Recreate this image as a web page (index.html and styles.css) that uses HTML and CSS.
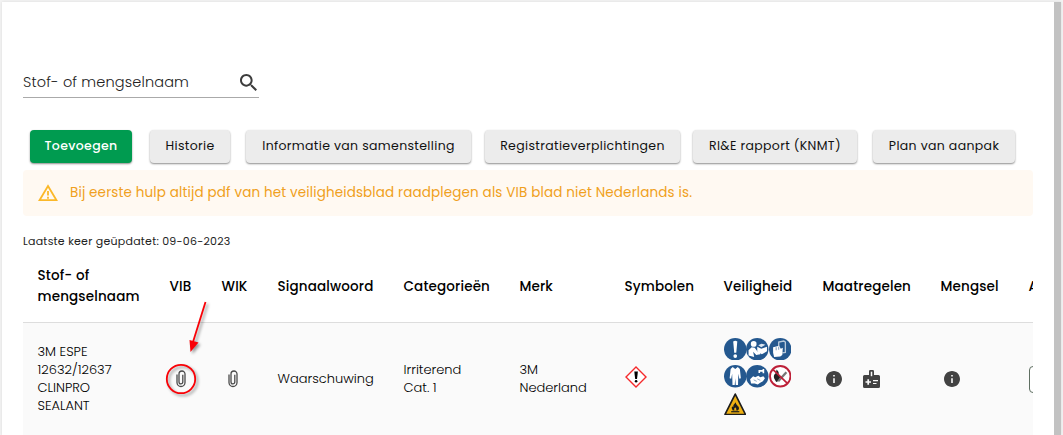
FILE: index.html
```
<!DOCTYPE html>
<html lang="nl">
<head>
  <meta charset="UTF-8">
  <meta name="viewport" content="width=device-width, initial-scale=1.0">
  <title>Stoffen</title>
  <link rel="stylesheet" href="styles.css">
</head>
<body>
  <svg class="sprite" width="0" height="0">
    <symbol id="clip" viewBox="0 0 10 18">
      <path d="M1 4.5v8a4 4 0 0 0 8 0V4a3 3 0 0 0-6 0v8a1.8 1.8 0 0 0 3.8 0V4.8" fill="none" stroke="#4a4a4a" stroke-width="1.3"/>
    </symbol>
    <symbol id="info" viewBox="2 2 20 20">
      <path fill="#424242" d="M12 2C6.48 2 2 6.48 2 12s4.48 10 10 10 10-4.48 10-10S17.52 2 12 2zm1 15h-2v-6h2v6zm0-8h-2V7h2v2z"/>
    </symbol>
  </svg>

  <main class="page">
    <div class="content">
      <div class="search">
        <span class="search-label">Stof- of mengselnaam</span>
        <svg class="search-icon" viewBox="3 3 17.5 17.5"><path fill="#3c3c3c" d="M15.5 14h-.79l-.28-.27C15.41 12.59 16 11.11 16 9.5 16 5.91 13.09 3 9.5 3S3 5.91 3 9.5 5.91 16 9.5 16c1.61 0 3.09-.59 4.23-1.57l.27.28v.79l5 4.99L20.49 19l-4.99-5zm-6 0C7.01 14 5 11.99 5 9.5S7.01 5 9.5 5 14 7.01 14 9.5 11.99 14 9.5 14z"/></svg>
      </div>

      <div class="actions">
        <button class="btn btn-primary">Toevoegen</button>
        <button class="btn btn-history">Historie</button>
        <button class="btn btn-info">Informatie van samenstelling</button>
        <button class="btn btn-registration">Registratieverplichtingen</button>
        <button class="btn btn-report">RI&amp;E rapport (KNMT)</button>
        <button class="btn btn-plan">Plan van aanpak</button>
      </div>

      <div class="alert">
        <svg class="alert-icon" viewBox="0 0 20 18">
          <path d="M10 2L18.5 16.2H1.5z" fill="none" stroke="#fbb829" stroke-width="1.8"/>
          <path d="M10 7v4.5M10 12.7v2" stroke="#fbb829" stroke-width="1.8"/>
        </svg>
        <span class="alert-text">Bij eerste hulp altijd pdf van het veiligheidsblad raadplegen als VIB blad niet Nederlands is.</span>
      </div>

      <p class="updated">Laatste keer geüpdatet: 09-06-2023</p>

      <div class="table-wrap">
        <table class="table">
          <colgroup>
            <col class="col-name">
            <col class="col-vib">
            <col class="col-wik">
            <col class="col-signal">
            <col class="col-category">
            <col class="col-brand">
            <col class="col-symbols">
            <col class="col-safety">
            <col class="col-measures">
            <col class="col-mixture">
            <col class="col-amount">
          </colgroup>
          <thead>
            <tr>
              <th>Stof- of<br>mengselnaam</th>
              <th>VIB</th>
              <th>WIK</th>
              <th>Signaalwoord</th>
              <th>Categorieën</th>
              <th>Merk</th>
              <th>Symbolen</th>
              <th>Veiligheid</th>
              <th>Maatregelen</th>
              <th>Mengsel</th>
              <th>A</th>
            </tr>
          </thead>
          <tbody>
            <tr>
              <td>3M ESPE<br>12632/12637<br>CLINPRO<br>SEALANT</td>
              <td>
                <div class="vib">
                  <svg class="clip"><use href="#clip"/></svg>
                  <svg class="marker" viewBox="0 0 60 110">
                    <circle cx="26" cy="85" r="14.2" fill="none" stroke="#f90006" stroke-width="1.8"/>
                    <path d="M50.5 8L38 48" stroke="#f90006" stroke-width="1.8"/>
                    <path d="M35.5 58L34.5 46L43.5 48.5z" fill="#f90006"/>
                  </svg>
                </div>
              </td>
              <td><svg class="clip clip-wik"><use href="#clip"/></svg></td>
              <td>Waarschuwing</td>
              <td>Irriterend<br>Cat. 1</td>
              <td>3M<br>Nederland</td>
              <td>
                <svg class="ghs" viewBox="0 0 22 22">
                  <path d="M11 1L21 11L11 21L1 11z" fill="#fff" stroke="#f5292b" stroke-width="1.4"/>
                  <path d="M9.3 5.5h3.6l-.9 7.5h-1.8z"/>
                  <circle cx="11.1" cy="15.2" r="1.3"/>
                </svg>
              </td>
              <td>
                <div class="pictograms">
                  <svg viewBox="0 0 22 22">
                    <circle cx="11" cy="11" r="11" fill="#24588f"/>
                    <path d="M9 3.5q2-1.500 4 0l-1 11h-2z" fill="#fff"/>
                    <circle cx="11" cy="17.7" r="1.8" fill="#fff"/>
                  </svg>
                  <svg viewBox="0 0 22 22">
                    <circle cx="11" cy="11" r="11" fill="#24588f"/>
                    <circle cx="7.5" cy="5.8" r="2.8" fill="#fff"/>
                    <path d="M2.5 17v-5l3-3 3 .5 2.500 3.500 3 1v2l-4 .5-3-3 1 5z" fill="#fff"/>
                    <path d="M11 8.5l4 2 5.5-2v4.5l-5 3-4.500-3z" fill="#fff"/>
                    <path d="M12 7l3-1.5 4 1-4 2.5z" fill="#dce6f0"/>
                  </svg>
                  <svg viewBox="0 0 22 22">
                    <circle cx="11" cy="11" r="11" fill="#24588f"/>
                    <path d="M9.5 8V4l5-1 1.500 1v10l-3 .5" fill="none" stroke="#b9cadb" stroke-width="1.3"/>
                    <path d="M4 9l6-1.500 1.500 3 2-1-.5 7-2 1.500-6 .5-1-4z" fill="#fff"/>
                    <path d="M7 9v3M9.500 8.500v3" stroke="#24588f" stroke-width=".6"/>
                  </svg>
                  <svg viewBox="0 0 22 22">
                    <circle cx="11" cy="11" r="11" fill="#24588f"/>
                    <path d="M8.5 2l2.5 2 2.5-2 2 2 1 9-1.500.5-1-5-.3 11h-2.200L11 13l-.5 6.500H8.300L8 8.500l-1 5-1.500-.5 1-9z" fill="#fff"/>
                  </svg>
                  <svg viewBox="0 0 22 22">
                    <circle cx="11" cy="11" r="11" fill="#24588f"/>
                    <path d="M17 4v4M17 5.700h-4v2" fill="none" stroke="#fff" stroke-width="1.6"/>
                    <path d="M4 14l3-3 2 1 3-1.500 2 1.500 3-1 1.500 2-2 3-3 1.500-2 1.500-3-1H5z" fill="#fff"/>
                    <path d="M7.500 14.500l3 1.500M11 13.500l3 1.500" stroke="#24588f" stroke-width=".5"/>
                  </svg>
                  <svg viewBox="0 0 22 22">
                    <circle cx="11" cy="11" r="10" fill="#fff"/>
                    <path d="M5 13q-1-3 1.500-5l1-3.500q2.500 2 2 5l1.500 1.500-1 4.500-3 1z" fill="#222"/>
                    <path d="M9 16l8-9" stroke="#777" stroke-width="2.2"/>
                    <path d="M4 4.5L18 18" stroke="#bd2038" stroke-width="1.7"/>
                    <circle cx="11" cy="11" r="10" fill="none" stroke="#bd2038" stroke-width="1.8"/>
                  </svg>
                  <svg viewBox="0 0 22 22">
                    <path d="M11 1L21 21H1z" fill="#eeb012" stroke="#1c1c1c" stroke-width="1.6" stroke-linejoin="round"/>
                    <path d="M8.5 17q-2-2-.5-4l1 1q0-3 2.500-5 0 2.500 1.800 3.500.7 1.500 1 .5 1 2.500-.8 4z" fill="#1c1c1c"/>
                    <path d="M7 18.3h8" stroke="#1c1c1c" stroke-width="1.2"/>
                    <path d="M10 17q-.5-2 1-3 1.500 1.500 1 3z" fill="#eeb012"/>
                  </svg>
                </div>
              </td>
              <td>
                <div class="measures">
                  <svg class="info"><use href="#info"/></svg>
                  <svg class="badge" viewBox="0 0 18 18">
                    <path d="M2 5h14a1.5 1.5 0 0 1 1.5 1.5v10A1.5 1.5 0 0 1 16 18H2a1.5 1.5 0 0 1-1.5-1.5v-10A1.5 1.5 0 0 1 2 5z" fill="#424242"/>
                    <path d="M6.5 7V1.200q0-1.200 1.200-1.200h2.600q1.200 0 1.200 1.200V7z" fill="#424242"/>
                    <path d="M9 1.7v4.5" stroke="#fafafa" stroke-width="1.5"/>
                    <path d="M3 12h5.5M5.7 9.300v5.400" stroke="#fafafa" stroke-width="1.7"/>
                    <path d="M10.5 10.700h5M10.500 13.500h3.500" stroke="#fafafa" stroke-width="1.2"/>
                  </svg>
                </div>
              </td>
              <td><svg class="info info-mixture"><use href="#info"/></svg></td>
              <td><div class="amount"></div></td>
            </tr>
          </tbody>
        </table>
      </div>
    </div>
    <div class="scrollbar"></div>
  </main>
</body>
</html>
```
FILE: styles.css
```
* {
  box-sizing: border-box;
}

body {
  margin: 0;
  height: 435px;
  padding: 2px 2px 0;
  overflow: hidden;
  background: #f3f3f3;
  font-family: Poppins, Inter, sans-serif;
  color: #111;
}

.sprite {
  display: none;
}

svg {
  display: block;
  flex-shrink: 0;
}

.page {
  display: flex;
  justify-content: space-between;
  height: 433px;
  background: #fff;
  box-shadow: 0 0 3px rgba(0, 0, 0, 0.1);
}

.content {
  width: 1010px;
  margin-left: 21px;
  padding-top: 68px;
}

.scrollbar {
  width: 7px;
  background: #c2c2c2;
}

.search {
  display: flex;
  align-items: center;
  justify-content: space-between;
  width: 236px;
  height: 28px;
  padding: 0 2px 2px 0;
  border-bottom: 1px solid #aaa;
}

.search-label {
  font-size: 14.5px;
  font-weight: 300;
  letter-spacing: 0.15px;
  color: #222;
}

.search-icon {
  width: 17px;
  height: 17px;
}

.actions {
  display: flex;
  height: 33px;
  margin: 32px 0 0 7px;
}

.btn {
  border: none;
  border-radius: 4px;
  padding: 0 0 2px;
  background: #ececec;
  font-family: inherit;
  font-size: 12.5px;
  letter-spacing: 0.35px;
  color: #111;
  white-space: nowrap;
  box-shadow: 0 1px 2px rgba(0, 0, 0, 0.45);
}

.btn-primary {
  width: 102px;
  background: #009b50;
  color: white;
  font-weight: 500;
}

.btn-history {
  width: 80px;
  margin-left: 18px;
}

.btn-info {
  width: 225px;
  margin-left: 16px;
}

.btn-registration {
  width: 195px;
  margin-left: 14px;
}

.btn-report {
  width: 164px;
  margin-left: 13px;
}

.btn-plan {
  width: 142px;
  margin-left: 16px;
}

.alert {
  display: flex;
  align-items: center;
  gap: 12px;
  height: 46px;
  margin-top: 7px;
  padding-left: 15px;
  border-radius: 4px;
  background: #fff9f2;
}

.alert-icon {
  width: 20px;
  height: 18px;
}

.alert-text {
  font-size: 13.5px;
  letter-spacing: 0.14px;
  color: #f0a020;
  white-space: nowrap;
}

.updated {
  margin: 17px 0 0;
  font-size: 11px;
  line-height: 16px;
  letter-spacing: 0.25px;
  color: #222;
}

.table-wrap {
  margin-top: 1px;
  overflow: hidden;
}

.table {
  width: 1061px;
  table-layout: fixed;
  border-collapse: separate;
  border-spacing: 0;
}

.col-name { width: 132px; }
.col-vib { width: 52px; }
.col-wik { width: 56px; }
.col-signal { width: 126px; }
.col-category { width: 116px; }
.col-brand { width: 105px; }
.col-symbols { width: 99px; }
.col-safety { width: 99px; }
.col-measures { width: 118px; }
.col-mixture { width: 88px; }
.col-amount { width: 70px; }

th {
  height: 73px;
  padding: 0 0 0 14.5px;
  border-bottom: 1px solid #ddd;
  font-size: 13.5px;
  font-weight: 500;
  line-height: 21px;
  letter-spacing: 0.15px;
  text-align: left;
  white-space: nowrap;
  color: #000;
}

td {
  height: 112px;
  padding: 0 0 0 14.5px;
  background: #fafafa;
  font-size: 13px;
  font-weight: 300;
  line-height: 18px;
  white-space: nowrap;
  color: #000;
}

.clip {
  width: 10px;
  height: 18px;
}

.clip-wik {
  margin-left: 6px;
}

.vib {
  position: relative;
  padding-left: 6px;
}

/* red callout pointing at the attachment */
.marker {
  position: absolute;
  left: -15px;
  top: -76px;
  width: 60px;
  height: 110px;
  filter: drop-shadow(2px 2px 1.5px rgba(0, 0, 0, 0.4));
}

.ghs {
  width: 22px;
  height: 22px;
  margin-bottom: 4px;
}

.pictograms {
  display: grid;
  grid-template-columns: repeat(3, 22.5px);
  row-gap: 5px;
  margin-bottom: 5px;
}

.pictograms svg {
  width: 22.5px;
  height: 22.5px;
}

.measures {
  display: flex;
  align-items: center;
  gap: 20px;
  padding-left: 3px;
}

.info {
  width: 16px;
  height: 16px;
}

.badge {
  width: 19px;
  height: 18px;
  margin-bottom: 1px;
}

.info-mixture {
  margin-left: 3px;
}

.amount {
  width: 50px;
  height: 27px;
  border: 1px solid #5f6f62;
  border-radius: 4px;
  background: #fff;
}
```
